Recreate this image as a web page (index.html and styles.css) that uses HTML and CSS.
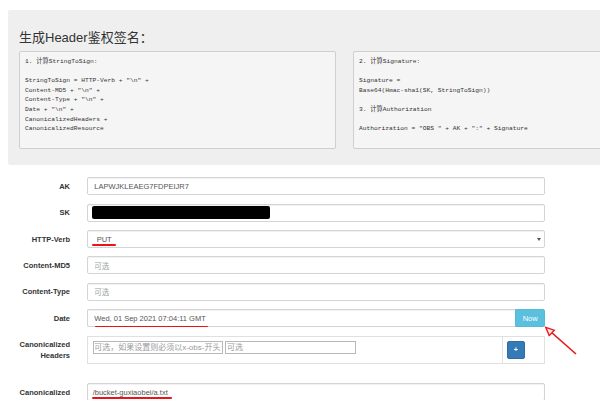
FILE: index.html
```html
<!DOCTYPE html>
<html>
<head>
<meta charset="utf-8">
<link rel="stylesheet" href="styles.css">
</head>
<body>
<div class="jumbo">
  <h3 class="title">生成Header鉴权签名：</h3>
  <div class="pres">
<pre class="code">1. 计算StringToSign:

StringToSign = HTTP-Verb + "\n" +
Content-MD5 + "\n" +
Content-Type + "\n" +
Date + "\n" +
CanonicalizedHeaders +
CanonicalizedResource</pre>
<pre class="code">2. 计算Signature:

Signature =
Base64(Hmac-sha1(SK, StringToSign))

3. 计算Authorization

Authorization = "OBS " + AK + ":" + Signature</pre>
  </div>
</div>

<div class="form">
  <div class="row">
    <div class="label">AK</div>
    <div class="input">LAPWJKLEAEG7FDPEIJR7</div>
  </div>
  <div class="row">
    <div class="label">SK</div>
    <div class="input sk"><div class="redact"></div></div>
  </div>
  <div class="row">
    <div class="label">HTTP-Verb</div>
    <div class="input select"><span class="mark mark-put">PUT</span><span class="caret"></span></div>
  </div>
  <div class="row">
    <div class="label">Content-MD5</div>
    <div class="input ph">可选</div>
  </div>
  <div class="row">
    <div class="label">Content-Type</div>
    <div class="input ph">可选</div>
  </div>
  <div class="row">
    <div class="label">Date</div>
    <div class="group">
      <div class="input joined"><span class="mark mark-date">Wed, 01 Sep 2021 07:04:11 GMT</span></div>
      <div class="btn-now">Now</div>
    </div>
  </div>
  <div class="row row-headers">
    <div class="label">Canonicalized Headers</div>
    <div class="hbox">
      <div class="hcell">
        <div class="hin">可选，如果设置则必须以x-obs-开头</div>
        <div class="hin">可选</div>
      </div>
      <div class="hright"><div class="plus">+</div></div>
    </div>
  </div>
  <div class="row">
    <div class="label">Canonicalized Resource</div>
    <div class="input res"><span class="mark mark-res">/bucket-guxiaobei/a.txt</span></div>
  </div>
</div>

<svg class="arrow" width="600" height="400" viewBox="0 0 600 400">
  <line x1="551" y1="332" x2="576" y2="354" stroke="#e8141a" stroke-width="1.6"/>
  <path d="M545.7 327.3 L554.3 330.2 L549.2 335.6 Z" fill="#fde0e0" stroke="#e8141a" stroke-width="1.3" stroke-linejoin="miter"/>
</svg>
</body>
</html>
```

FILE: styles.css
```css
html, body {
  overflow-x: hidden;
}
body {
  margin: 0;
  font-family: "Liberation Sans", "Noto Sans CJK SC", sans-serif;
  color: #333;
  position: relative;
  min-height: 400px;
}
.jumbo {
  margin: 10px 0 0 8px;
  width: 673px;
  box-sizing: border-box;
  padding: 19.5px 11px 16.2px;
  background: #efefef;
  border-radius: 2px;
}
.title {
  margin: 0 0 5.5px;
  font-size: 13px;
  line-height: 16px;
  font-weight: normal;
  color: #333;
}
.pres {
  display: flex;
  gap: 17px;
}
.code {
  margin: 0;
  width: 317px;
  box-sizing: border-box;
  padding: 5px 5px 14px;
  background: #f5f5f5;
  border: 1px solid #cfcfcf;
  border-radius: 2px;
  font-family: "Liberation Mono", "Noto Sans CJK SC", monospace;
  font-size: 6.25px;
  line-height: 9.6px;
  color: #333;
  white-space: pre;
  overflow: hidden;
}
.form {
  margin-top: 12.3px;
  display: flex;
  flex-direction: column;
  gap: 8.4px;
}
.row {
  display: grid;
  grid-template-columns: 70px 458px;
  column-gap: 17px;
  align-items: start;
}
.row-headers {
  margin-bottom: 10.6px;
}
.label {
  font-size: 7.5px;
  line-height: 11px;
  font-weight: bold;
  text-align: right;
  padding-top: 3.5px;
  color: #333;
}
.input {
  height: 18px;
  box-sizing: border-box;
  border: 1px solid #d4d4d4;
  border-radius: 2px;
  box-shadow: inset 0 1px 1px rgba(0,0,0,0.06);
  background: #fff;
  padding: 0 6.3px;
  display: flex;
  align-items: center;
  font-size: 7.5px;
  color: #555;
  white-space: nowrap;
}
.ph {
  color: #a0a0a0;
}
.sk {
  padding: 0 3.5px;
}
.redact {
  width: 178.5px;
  height: 13.3px;
  background: #000;
  border-radius: 2px;
}
.select {
  padding-left: 8.7px;
  padding-right: 3.5px;
  justify-content: space-between;
}
.caret {
  width: 0;
  height: 0;
  border-left: 2px solid transparent;
  border-right: 2px solid transparent;
  border-top: 3px solid #555;
}
.res {
  padding-left: 4.7px;
}
.mark {
  position: relative;
}
.mark::after {
  content: "";
  position: absolute;
  height: 1.6px;
  background: #e8141a;
  border-radius: 1px;
}
.mark-put::after {
  left: -4.7px;
  right: -4px;
  top: calc(100% + 0.4px);
}
.mark-date::after {
  left: 0.7px;
  right: -2px;
  top: calc(100% + 3px);
}
.mark-res::after {
  left: -0.3px;
  right: -4px;
  top: calc(100% + 0.4px);
}
.group {
  display: flex;
}
.joined {
  flex: 1;
  border-radius: 2px 0 0 2px;
  border-right: none;
}
.btn-now {
  width: 29.7px;
  height: 18px;
  box-sizing: border-box;
  background: #5bc0de;
  border: 1px solid #53bbda;
  border-radius: 0 2px 2px 0;
  color: #fff;
  font-size: 7.5px;
  display: flex;
  align-items: center;
  justify-content: center;
}
.hbox {
  height: 28.5px;
  box-sizing: border-box;
  border: 1px solid #e0e0e0;
  display: flex;
}
.hcell {
  flex: 1;
  padding: 4px 4.7px;
  display: flex;
  gap: 2.3px;
  align-items: flex-start;
}
.hin {
  width: 130.5px;
  height: 13.3px;
  box-sizing: border-box;
  border: 1px solid #b8b8b8;
  background: #fff;
  font-size: 8px;
  line-height: 11px;
  padding-left: 0.5px;
  color: #9a9a9a;
  white-space: nowrap;
  overflow: hidden;
}
.hright {
  width: 41.7px;
  box-sizing: border-box;
  border-left: 1px solid #e0e0e0;
  padding: 4px 0 0 3.4px;
}
.plus {
  width: 18.3px;
  height: 18.3px;
  box-sizing: border-box;
  background: #337ab7;
  border: 1px solid #2e6da4;
  border-radius: 2px;
  color: #fff;
  font-size: 7px;
  font-weight: bold;
  display: flex;
  align-items: center;
  justify-content: center;
}
.arrow {
  position: absolute;
  left: 0;
  top: 0;
  pointer-events: none;
}
```
